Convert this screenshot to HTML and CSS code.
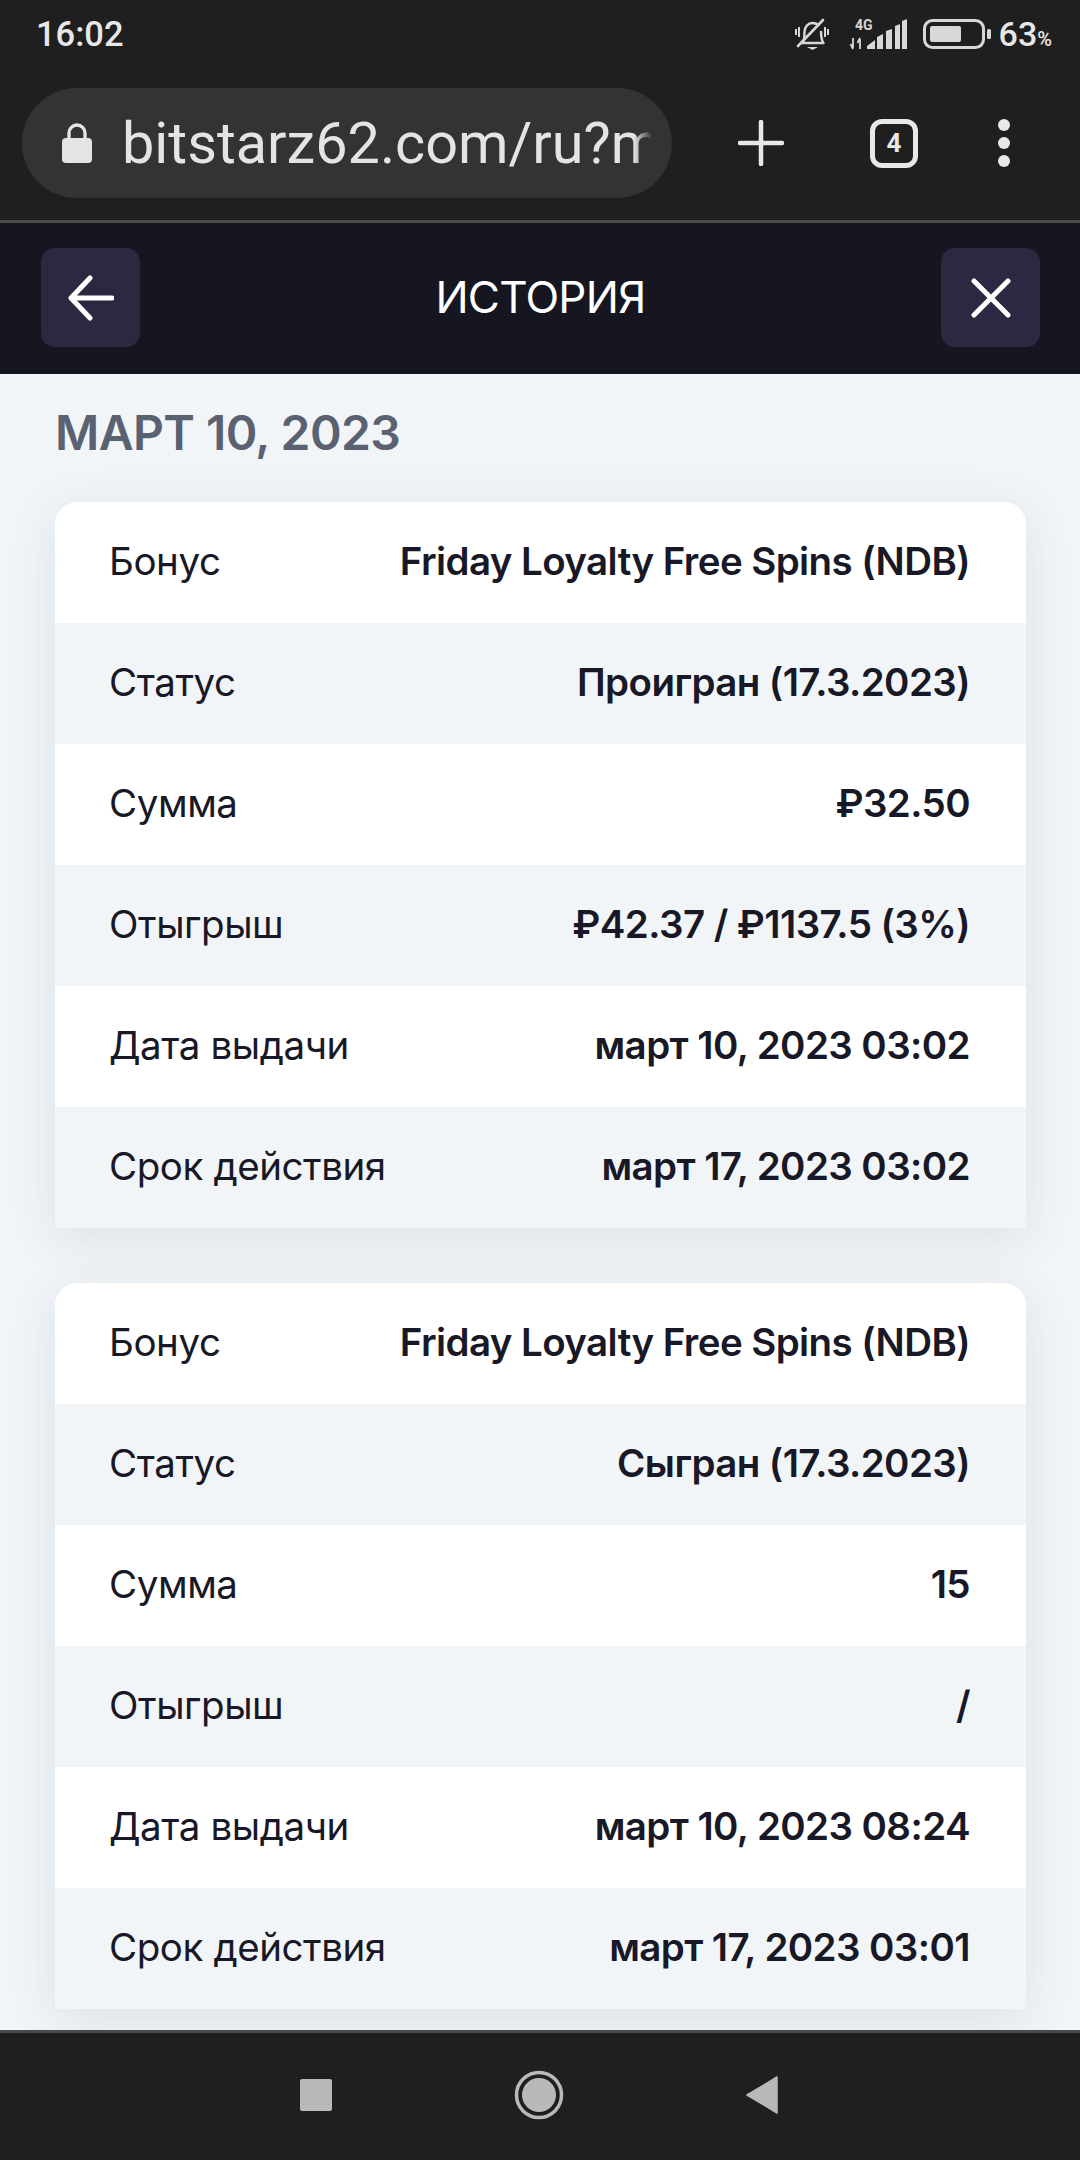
FILE: index.html
```html
<!DOCTYPE html>
<html lang="ru">
<head>
    <meta charset="UTF-8">
    <meta name="viewport" content="width=device-width, initial-scale=1.0">
    <title>История</title>
    <link rel="stylesheet" href="styles.css">
</head>
<body>
    <div class="phone">
        <div class="status-bar">
            <span class="clock">16:02</span>
            <div class="status-icons">
                <svg width="35" height="33" viewBox="0 0 35 33">
                    <path d="M8 24c1.500-2 1.500-5 1.500-10 0-5 3.500-9 8-9 3 0 5 1 6.500 3M26 13c0 5 0 9 2.500 12H7" fill="none" stroke="#d8d8d8" stroke-width="2.400" stroke-linejoin="round"/>
                    <path d="M12 29h11l-5.500 3z" fill="#d8d8d8"/>
                    <path d="M3 28 28 2" stroke="#d8d8d8" stroke-width="2.600" stroke-linecap="round"/>
                    <path d="M1 11v6M4 9v10M30 9v10M33 11v6" stroke="#d8d8d8" stroke-width="2"/>
                </svg>
                <svg class="icon-signal" width="58" height="31" viewBox="0 0 58 31">
                    <text x="5" y="11" class="net-label">4G</text>
                    <path d="M3 19v10M0.500 25 3 30M10 30V20M7.500 24 10 19" fill="none" stroke="#d8d8d8" stroke-width="1.800"/>
                    <path d="M17 30v-3l8-6v9zM27 30V18l6-3v15zM36 30V12l6-2v20zM45 30V7l5-2v25zM52 30V2l5-2v30z" fill="#d8d8d8"/>
                </svg>
                <svg class="icon-battery" width="68" height="30" viewBox="0 0 68 30">
                    <rect x="1.500" y="1.500" width="59" height="27" rx="8" fill="none" stroke="#d8d8d8" stroke-width="3"/>
                    <rect x="7" y="7" width="31" height="16" rx="2" fill="#d8d8d8"/>
                    <rect x="64" y="10" width="4" height="10" rx="1.500" fill="#d8d8d8"/>
                </svg>
                <span class="battery-level">63<small>%</small></span>
            </div>
        </div>

        <div class="browser-bar">
            <div class="url-pill">
                <svg class="icon-lock" width="30" height="40" viewBox="0 0 30 40">
                    <path d="M7 16V10a8 8 0 0 1 16 0v6" fill="none" stroke="#e4e4e4" stroke-width="3.400"/>
                    <rect y="15" width="30" height="25" rx="4" fill="#e4e4e4"/>
                </svg>
                <span class="url-text">bitstarz62.com/ru?m=history</span>
            </div>
            <svg class="btn-plus" width="46" height="46" viewBox="0 0 46 46">
                <path d="M23 2v42M2 23h42" stroke="#e8e8e8" stroke-width="4.500" stroke-linecap="round"/>
            </svg>
            <div class="tab-count">4</div>
            <div class="menu-dots"><i></i><i></i><i></i></div>
        </div>

        <header class="page-header">
            <button class="square-btn" aria-label="Назад">
                <svg width="46" height="46" viewBox="0 0 46 46">
                    <path d="M44 23H4M22 3 3 23l19 20" fill="none" stroke="#fff" stroke-width="5" stroke-linecap="round" stroke-linejoin="round"/>
                </svg>
            </button>
            <h1>ИСТОРИЯ</h1>
            <button class="square-btn" aria-label="Закрыть">
                <svg width="40" height="40" viewBox="0 0 40 40">
                    <path d="M3 3l34 34M37 3 3 37" fill="none" stroke="#fff" stroke-width="5" stroke-linecap="round"/>
                </svg>
            </button>
        </header>

        <main class="history">
            <h2>МАРТ 10, 2023</h2>

            <section class="bonus-card">
                <div class="row"><span>Бонус</span><b>Friday Loyalty Free Spins (NDB)</b></div>
                <div class="row"><span>Статус</span><b>Проигран (17.3.2023)</b></div>
                <div class="row"><span>Сумма</span><b>₽32.50</b></div>
                <div class="row"><span>Отыгрыш</span><b>₽42.37 / ₽1137.5 (3%)</b></div>
                <div class="row"><span>Дата выдачи</span><b>март 10, 2023 03:02</b></div>
                <div class="row"><span>Срок действия</span><b>март 17, 2023 03:02</b></div>
            </section>

            <section class="bonus-card">
                <div class="row"><span>Бонус</span><b>Friday Loyalty Free Spins (NDB)</b></div>
                <div class="row"><span>Статус</span><b>Сыгран (17.3.2023)</b></div>
                <div class="row"><span>Сумма</span><b>15</b></div>
                <div class="row"><span>Отыгрыш</span><b>/</b></div>
                <div class="row"><span>Дата выдачи</span><b>март 10, 2023 08:24</b></div>
                <div class="row"><span>Срок действия</span><b>март 17, 2023 03:01</b></div>
            </section>
        </main>

        <nav class="nav-bar">
            <svg width="32" height="32" viewBox="0 0 32 32"><rect width="32" height="32" rx="2" fill="#b9b9b9"/></svg>
            <svg width="50" height="50" viewBox="0 0 50 50">
                <circle cx="25" cy="25" r="22.500" fill="none" stroke="#b9b9b9" stroke-width="3.500"/>
                <circle cx="25" cy="25" r="17" fill="#b9b9b9"/>
            </svg>
            <svg width="32" height="38" viewBox="0 0 32 38"><path d="M31 1v36L1 19z" fill="#b9b9b9" stroke="#b9b9b9" stroke-width="1.500" stroke-linejoin="round"/></svg>
        </nav>
    </div>
</body>
</html>
```

FILE: styles.css
```css
body {
    margin: 0;
    font-family: 'Inter', sans-serif;
    background-color: #f1f5f8;
}
.phone {
    display: flex;
    flex-direction: column;
    width: 1080px;
    height: 2160px;
    overflow: hidden;
}

/* android status bar */
.status-bar {
    display: flex;
    flex: none;
    align-items: center;
    justify-content: space-between;
    height: 71px;
    padding: 0 28px 3px 36px;
    box-sizing: border-box;
    background-color: #1f1f1f;
    font-family: 'Roboto', sans-serif;
    color: #e8e8e8;
}
.clock {
    font-size: 34.5px;
    font-weight: 500;
}
.status-icons {
    display: flex;
    align-items: center;
}
.status-icons svg {
    overflow: visible;
}
.icon-signal {
    margin-left: 20px;
}
.icon-battery {
    margin-left: 15px;
}
.net-label {
    font-family: 'Roboto', sans-serif;
    font-size: 14px;
    font-weight: 700;
    fill: #d8d8d8;
}
.battery-level {
    margin-left: 8px;
    font-size: 34px;
    font-weight: 500;
}
.battery-level small {
    font-size: 20px;
}

/* browser toolbar */
.browser-bar {
    display: flex;
    flex: none;
    align-items: center;
    height: 152px;
    padding: 0 0 5px 22px;
    box-sizing: border-box;
    background-color: #1f1f1f;
    border-bottom: 3px solid #4a4a4a;
}
.url-pill {
    display: flex;
    align-items: center;
    gap: 30px;
    width: 650px;
    height: 110px;
    padding-left: 40px;
    padding-right: 20px;
    box-sizing: border-box;
    border-radius: 55px;
    background-color: #333333;
    overflow: hidden;
}
.icon-lock {
    flex: none;
}
.url-text {
    font-family: 'Roboto', sans-serif;
    font-size: 57.6px;
    color: #e4e4e4;
    white-space: nowrap;
    overflow: hidden;
    -webkit-mask-image: linear-gradient(to left, transparent, #000 18px);
    mask-image: linear-gradient(to left, transparent, #000 18px);
}
.btn-plus {
    margin-left: 66px;
}
.tab-count {
    width: 48px;
    height: 49px;
    margin-left: 86px;
    box-sizing: border-box;
    border: 5px solid #e8e8e8;
    border-radius: 12px;
    font-family: 'Roboto', sans-serif;
    font-size: 26px;
    font-weight: 700;
    line-height: 39px;
    text-align: center;
    color: #e8e8e8;
}
.menu-dots {
    display: flex;
    flex-direction: column;
    gap: 6px;
    margin-left: 80px;
}
.menu-dots i {
    display: block;
    width: 12px;
    height: 12px;
    border-radius: 50%;
    background-color: #e8e8e8;
}

/* site header */
.page-header {
    display: flex;
    flex: none;
    align-items: center;
    justify-content: space-between;
    height: 151px;
    padding: 0 40px 2px 41px;
    box-sizing: border-box;
    background-color: #161621;
}
.page-header h1 {
    margin: 0 0 2px;
    font-size: 44px;
    font-weight: 400;
    letter-spacing: -0.8px;
    color: #ffffff;
}
.square-btn {
    display: flex;
    align-items: center;
    justify-content: center;
    width: 99px;
    height: 99px;
    padding: 0;
    border: none;
    border-radius: 14px;
    background-color: #2b2942;
}

/* history list */
.history {
    flex: 1;
    min-height: 0;
    padding: 0 54px 0 55px;
    overflow: hidden;
}
.history h2 {
    margin: 32px 0 43px;
    font-size: 48px;
    line-height: 53px;
    font-weight: 600;
    letter-spacing: -0.6px;
    color: #5a6171;
}
.bonus-card {
    margin-bottom: 55px;
    border-radius: 22px 22px 0 0;
    background-color: #ffffff;
    box-shadow: 0 10px 50px rgba(50, 60, 90, 0.11);
    overflow: hidden;
}
.row {
    display: flex;
    align-items: center;
    justify-content: space-between;
    height: 121px;
    padding: 0 56px 4px 54px;
    box-sizing: border-box;
    font-size: 38.5px;
    letter-spacing: -0.42px;
    color: #181826;
}
.row:nth-child(even) {
    background-color: #f1f5f8;
}
.row b {
    font-weight: 600;
    letter-spacing: -0.58px;
}

/* android nav bar */
.nav-bar {
    display: flex;
    flex: none;
    align-items: center;
    justify-content: center;
    gap: 182px;
    height: 130px;
    box-sizing: border-box;
    padding: 0 2px 4px 0;
    background-color: #1f1f1f;
    border-top: 3px solid #4a4a4a;
}
```
